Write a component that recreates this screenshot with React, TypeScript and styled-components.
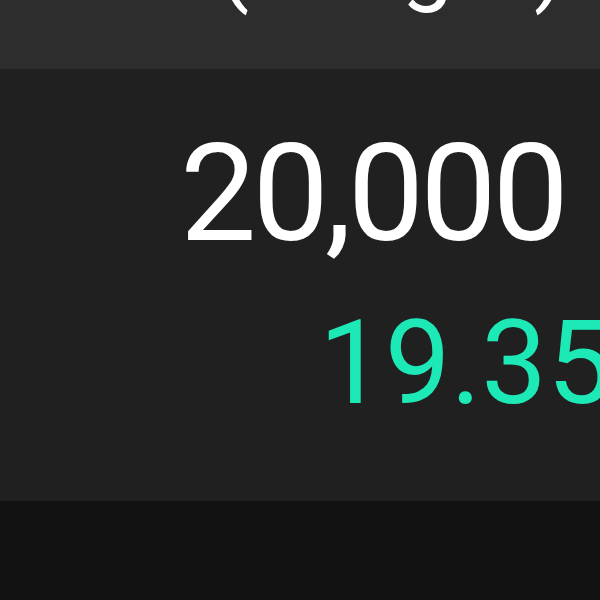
import styled, { createGlobalStyle } from "styled-components";

const GlobalStyle = createGlobalStyle`
  html, body {
    margin: 0;
    padding: 0;
    background: #121212;
  }
  body {
    font-family: Roboto, "Noto Sans", "Liberation Sans", sans-serif;
    overflow: hidden;
  }
`;

const Screen = styled.div`
  width: 600px;
  height: 600px;
  display: flex;
  flex-direction: column;
  background: #121212;
  overflow: hidden;
`;

const Header = styled.div`
  height: 69px;
  flex: none;
  display: flex;
  justify-content: flex-end;
  align-items: flex-end;
  padding-right: 34px;
  background: #2d2d2d;
  overflow: hidden;
`;

const HeaderLabel = styled.span`
  font-size: 92px;
  line-height: 1;
  color: #ffffff;
  white-space: nowrap;
  margin-bottom: 60px;
`;

const Panel = styled.div`
  height: 432px;
  flex: none;
  display: flex;
  flex-direction: column;
  padding-top: 57px;
  box-sizing: border-box;
  background: #202020;
`;

type ValueProps = {
  $size: number;
  $color: string;
  $spacing: number;
};

const Value = styled.div<ValueProps>`
  font-size: ${(p) => p.$size}px;
  line-height: 1;
  color: ${(p) => p.$color};
  white-space: nowrap;
  letter-spacing: ${(p) => p.$spacing}px;
`;

const Amount = styled(Value)`
  align-self: flex-end;
  margin-right: 35px;
`;

const Price = styled(Value)`
  align-self: flex-start;
  margin-top: 43px;
  margin-left: 319px;
`;

const Footer = styled.div`
  flex: 1;
  background: #121212;
`;

export default function App() {
  return (
    <>
      <GlobalStyle />
      <Screen>
        <Header>
          <HeaderLabel>(Weight)</HeaderLabel>
        </Header>
        <Panel>
          <Amount $size={136} $color="#ffffff" $spacing={-4}>
            20,000
          </Amount>
          <Price $size={117} $color="#1de9b6" $spacing={0}>
            19.35
          </Price>
        </Panel>
        <Footer />
      </Screen>
    </>
  );
}
